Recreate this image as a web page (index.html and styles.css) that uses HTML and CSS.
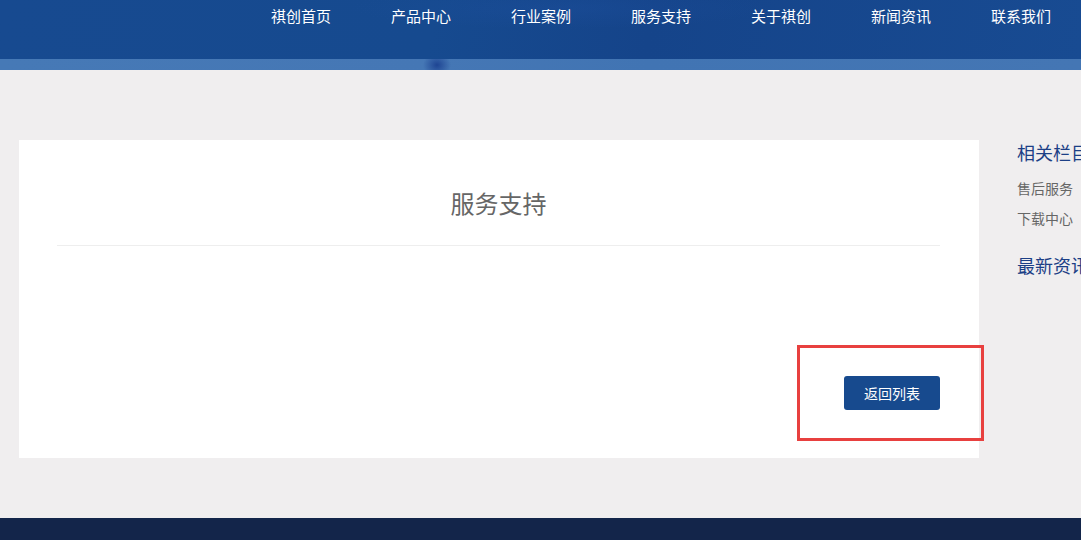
FILE: index.html
```html
<!DOCTYPE html>
<html lang="zh">
<head>
<meta charset="utf-8">
<title>服务支持</title>
<link rel="stylesheet" href="styles.css">
</head>
<body>
<header class="header">
  <div class="header-top">
    <nav class="nav">
      <a class="nav-item" href="#">祺创首页</a>
      <a class="nav-item" href="#">产品中心</a>
      <a class="nav-item" href="#">行业案例</a>
      <a class="nav-item" href="#">服务支持</a>
      <a class="nav-item" href="#">关于祺创</a>
      <a class="nav-item" href="#">新闻资讯</a>
      <a class="nav-item" href="#">联系我们</a>
    </nav>
  </div>
  <div class="header-strip"></div>
</header>
<main class="main">
  <section class="card">
    <h1 class="card-title">服务支持</h1>
    <div class="card-body"></div>
    <div class="card-actions">
      <a class="back-btn" href="#">返回列表</a>
      <span class="highlight"></span>
    </div>
  </section>
  <aside class="side">
    <h2 class="side-title">相关栏目</h2>
    <ul class="side-list">
      <li>售后服务</li>
      <li>下载中心</li>
    </ul>
    <h2 class="side-title side-title-2">最新资讯</h2>
  </aside>
</main>
<footer class="footer"></footer>
</body>
</html>
```
FILE: styles.css
```css
* { box-sizing: border-box; }
html, body { margin: 0; padding: 0; }
body {
  width: 1081px;
  height: 540px;
  overflow: hidden;
  background: #f0eeef;
  font-family: "Microsoft YaHei", "Noto Sans CJK SC", "Liberation Sans", sans-serif;
}
a { text-decoration: none; }

.header-top {
  height: 59px;
  background:
    radial-gradient(ellipse 300px 30px at 560px 8px, rgba(30,80,160,0.35), rgba(30,80,160,0) 70%),
    linear-gradient(100deg, #174a90 0%, #164a8f 40%, #15448a 60%, #184b92 100%);
}
.nav {
  display: flex;
  padding-left: 241px;
}
.nav-item {
  width: 120px;
  text-align: center;
  color: #ffffff;
  font-size: 15px;
  line-height: 32px;
}
.header-strip {
  height: 11px;
  background:
    radial-gradient(ellipse 14px 12px at 437px 6px, rgba(28,66,145,0.95), rgba(28,66,145,0) 100%),
    linear-gradient(90deg, #4679b6 0%, #4577b5 40%, #4174b3 60%, #4476b4 100%);
}

.main {
  display: flex;
  align-items: flex-start;
  padding: 70px 0 0 19px;
  height: 448px;
}
.card {
  width: 960px;
  height: 318px;
  flex-shrink: 0;
  background: #ffffff;
  padding: 0 39px 0 38px;
  display: flex;
  flex-direction: column;
}
.card-title {
  margin: 0;
  padding-top: 47px;
  height: 106px;
  border-bottom: 1px solid #eeeeee;
  text-align: center;
  font-size: 24px;
  font-weight: normal;
  color: #666666;
  line-height: 32px;
}
.card-body { height: 130px; }
.card-actions {
  position: relative;
  display: flex;
  justify-content: flex-end;
}
.back-btn {
  width: 96px;
  height: 34px;
  line-height: 34px;
  text-align: center;
  background: #174a8e;
  color: #ffffff;
  font-size: 14px;
  border-radius: 3px;
}
.highlight {
  position: absolute;
  right: -44px;
  top: -31px;
  width: 187px;
  height: 96px;
  border: 3px solid #e8403f;
}

.side {
  padding-left: 38px;
  white-space: nowrap;
}
.side-title {
  margin: 0;
  font-size: 18px;
  font-weight: normal;
  color: #1c3f86;
  line-height: 24px;
}
.side-list {
  list-style: none;
  margin: 0;
  padding: 9px 0 0;
}
.side-list li {
  font-size: 14px;
  color: #666666;
  line-height: 30px;
}
.side-title-2 { margin-top: 20px; }

.footer {
  height: 22px;
  background: #13254a;
}
```
